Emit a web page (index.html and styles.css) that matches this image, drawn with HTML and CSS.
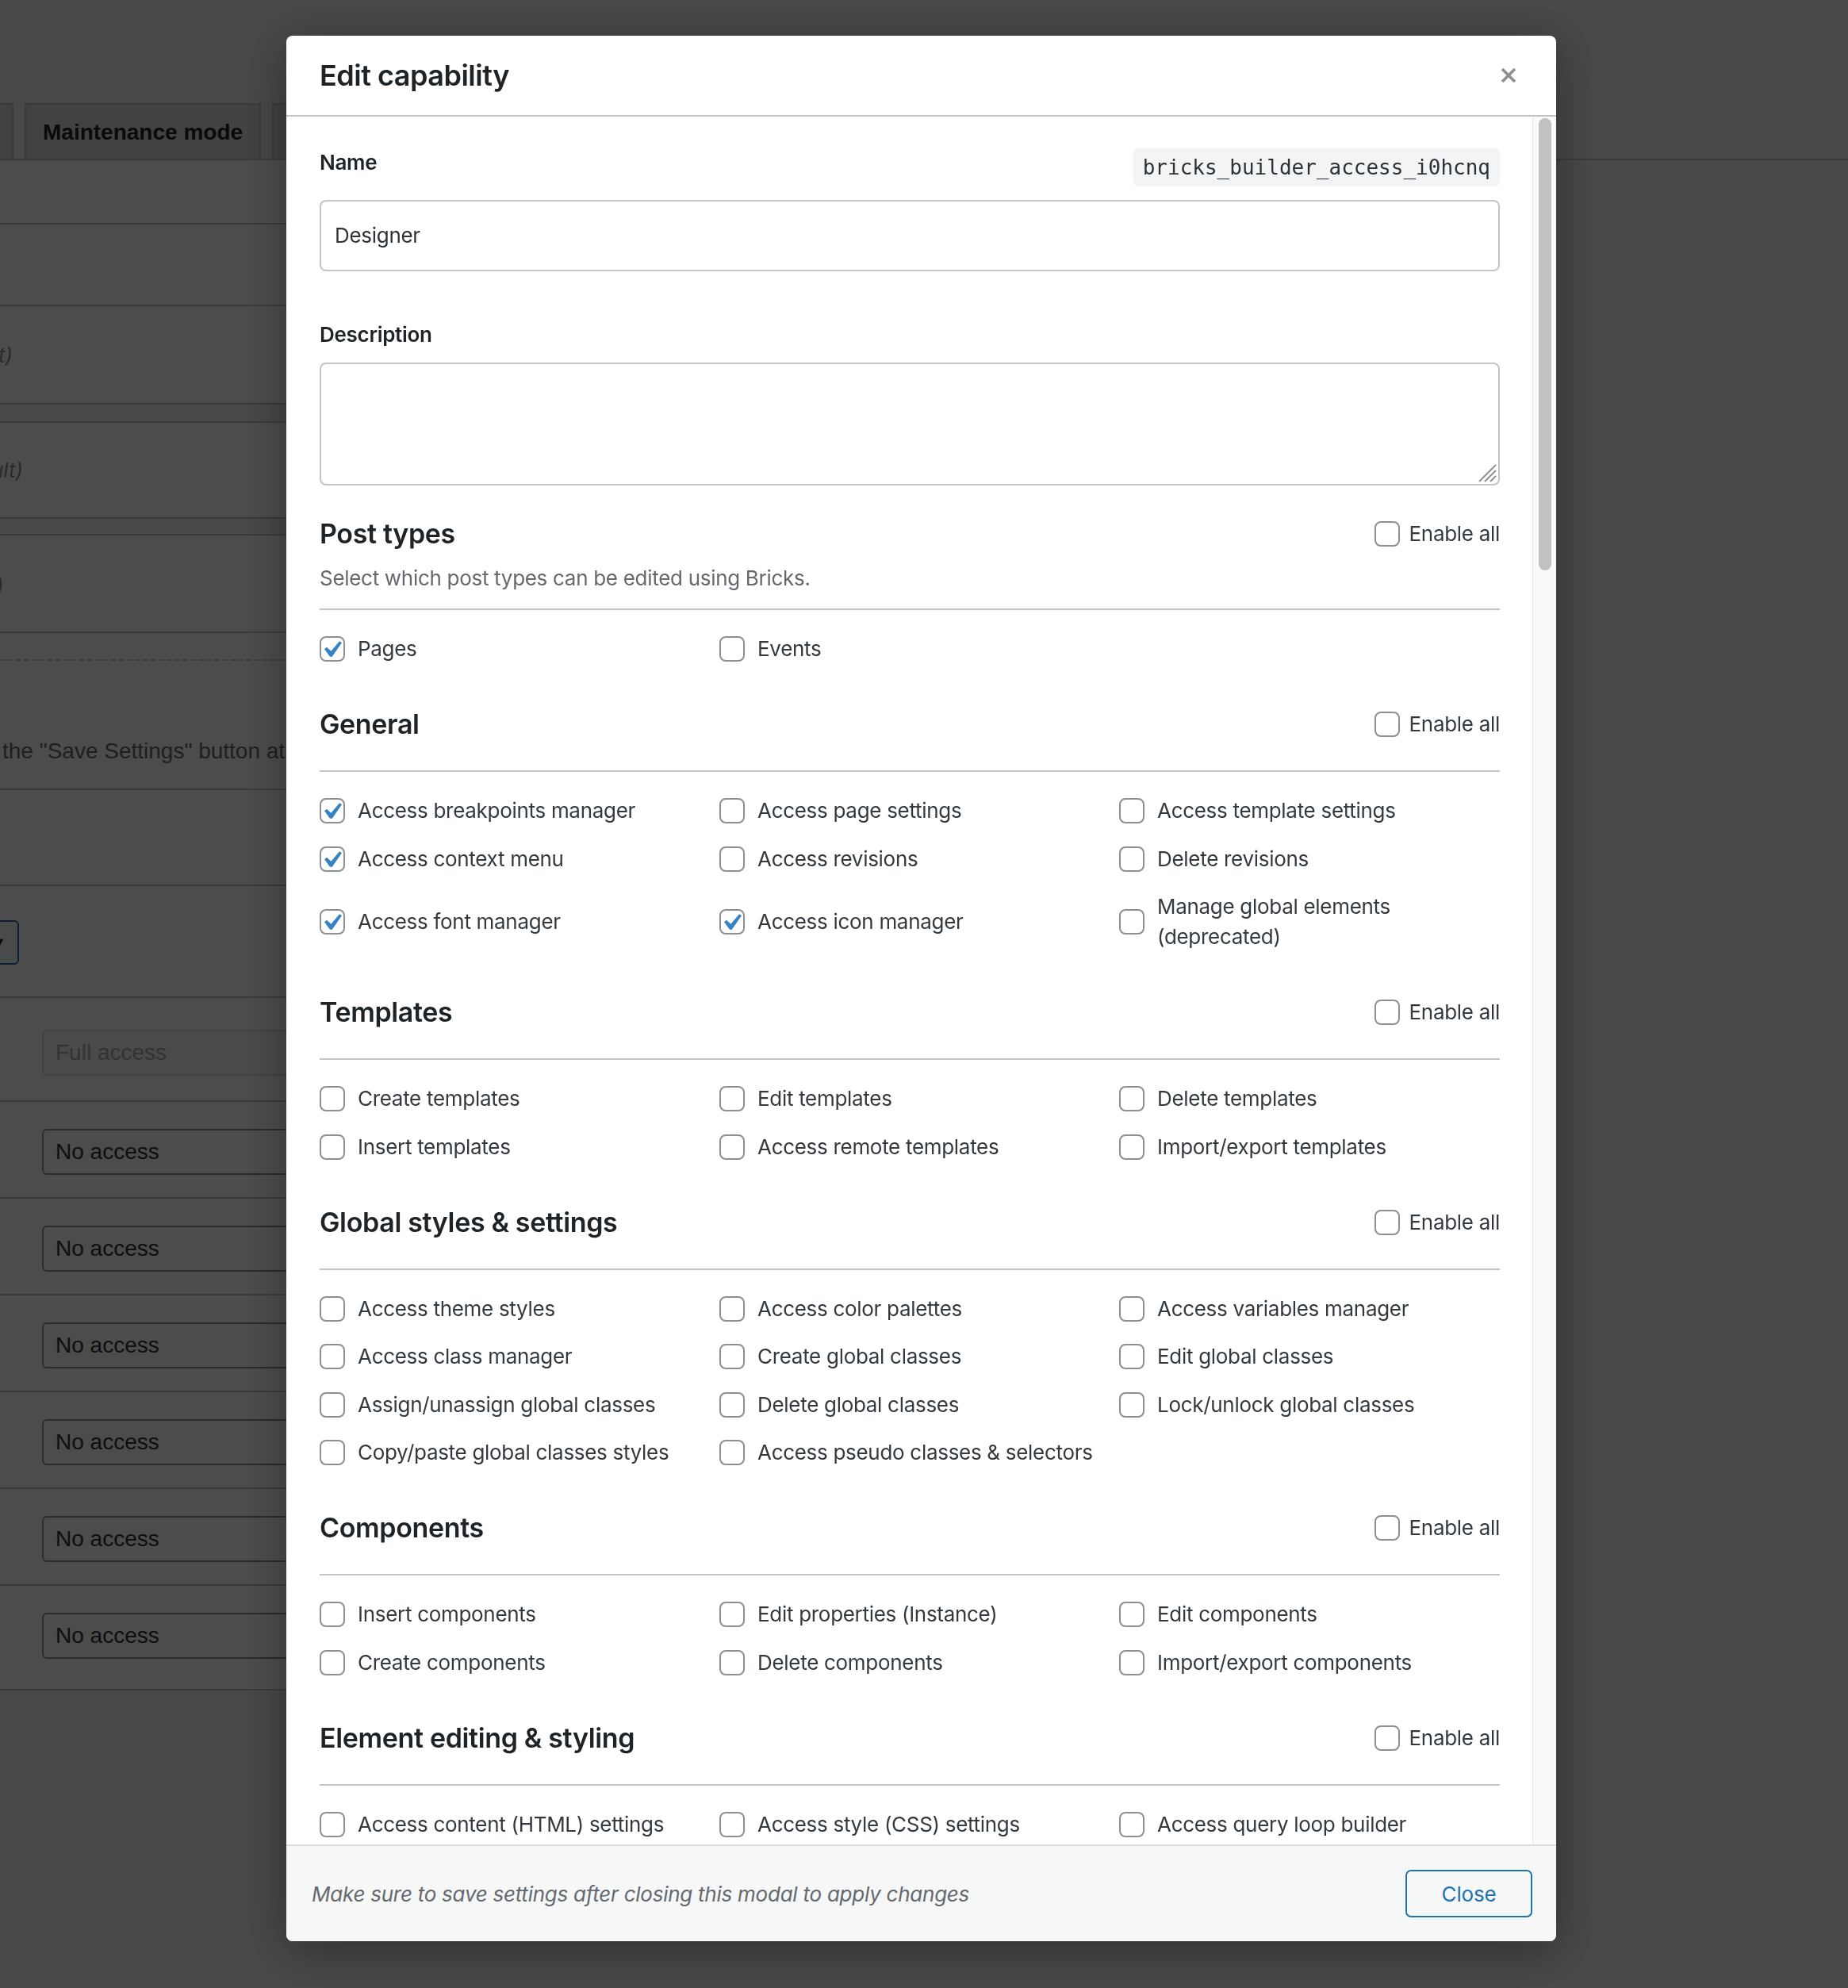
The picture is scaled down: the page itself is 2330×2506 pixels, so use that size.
FILE: index.html
```html
<!DOCTYPE html>
<html lang="en">
<head>
<meta charset="utf-8">
<title>Edit capability</title>
<link rel="stylesheet" href="styles.css">
</head>
<body>
<div class="admin">
  <nav class="tabs">
    <span class="tab tab-prev">Builder access</span>
    <span class="tab">Maintenance mode</span>
    <span class="tab">Custom code</span>
    <span class="tab">Performance</span>
  </nav>
  <div class="bg-table">
    <div class="bg-row h79"></div>
    <div class="bg-row h101"></div>
    <div class="bg-row h122 mid"><span class="bg-th end16">Author (default)</span></div>
    <div class="bg-gap h21"></div>
    <div class="bg-row h119 mid"><span class="bg-th end29">Contributor (default)</span></div>
    <div class="bg-gap h19"></div>
    <div class="bg-row h121 mid"><span class="bg-th end5 plain">Subscriber (no access)</span></div>
    <div class="bg-row h33 dashed"></div>
    <div class="bg-row h161 note-row"><span class="bg-note">the "Save Settings" button at the bottom</span></div>
    <div class="bg-row h119"></div>
    <div class="bg-row h139 btn-row"><span class="bg-btn">▾</span></div>
    <div class="bg-row h129 field-row"><span class="bg-select is-disabled">Full access</span></div>
    <div class="bg-row r122 field-row2"><span class="bg-select">No access</span></div>
    <div class="bg-row r122 field-row2"><span class="bg-select">No access</span></div>
    <div class="bg-row r122 field-row2"><span class="bg-select">No access</span></div>
    <div class="bg-row r122 field-row2"><span class="bg-select">No access</span></div>
    <div class="bg-row r122 field-row2"><span class="bg-select">No access</span></div>
    <div class="bg-row r132 field-row2"><span class="bg-select">No access</span></div>
  </div>
</div>

<div class="backdrop"></div>

<div class="modal" role="dialog" aria-labelledby="modal-title">
  <header class="modal-head">
    <h2 id="modal-title">Edit capability</h2>
    <button class="modal-x" aria-label="Close">
      <svg viewBox="0 0 20 20" width="20" height="20"><path d="M2 2 L18 18 M18 2 L2 18" stroke="#8c8f94" stroke-width="3.6" fill="none"/></svg>
    </button>
  </header>

  <div class="modal-main">
    <div class="modal-body">
      <div class="name-row">
        <label class="field-label">Name</label>
        <code class="cap-id">bricks_builder_access_i0hcnq</code>
      </div>
      <div class="text-input">Designer</div>

      <label class="field-label desc-label">Description</label>
      <div class="textarea"><span class="resize"><svg viewBox="0 0 24 24" width="24" height="24"><path d="M23 2 L2 23 M23 9 L9 23 M23 16 L16 23" stroke="#8c8f94" stroke-width="2" fill="none"/></svg></span></div>

      <section class="section first">
        <div class="section-top has-desc">
          <div class="section-head">
            <h3>Post types</h3>
            <label class="check enable"><span class="box"></span>Enable all</label>
          </div>
          <p class="section-desc">Select which post types can be edited using Bricks.</p>
        </div>
        <div class="grid">
          <label class="check"><span class="box on"><svg viewBox="0 0 20 20"><path d="M14.83 4.89l1.34.94-5.81 8.38H9.02L5.78 9.670l1.34-1.25 2.57 2.4z"/></svg></span>Pages</label>
          <label class="check"><span class="box"></span>Events</label>
        </div>
      </section>

      <section class="section">
        <div class="section-top">
          <div class="section-head">
            <h3>General</h3>
            <label class="check enable"><span class="box"></span>Enable all</label>
          </div>
        </div>
        <div class="grid">
          <label class="check"><span class="box on"><svg viewBox="0 0 20 20"><path d="M14.83 4.89l1.34.94-5.81 8.38H9.02L5.78 9.67l1.34-1.25 2.57 2.4z"/></svg></span>Access breakpoints manager</label>
          <label class="check"><span class="box"></span>Access page settings</label>
          <label class="check"><span class="box"></span>Access template settings</label>
          <label class="check"><span class="box on"><svg viewBox="0 0 20 20"><path d="M14.83 4.89l1.34.94-5.81 8.38H9.02L5.78 9.67l1.34-1.25 2.57 2.4z"/></svg></span>Access context menu</label>
          <label class="check"><span class="box"></span>Access revisions</label>
          <label class="check"><span class="box"></span>Delete revisions</label>
          <label class="check"><span class="box on"><svg viewBox="0 0 20 20"><path d="M14.83 4.89l1.34.94-5.81 8.38H9.02L5.78 9.67l1.34-1.25 2.57 2.4z"/></svg></span>Access font manager</label>
          <label class="check"><span class="box on"><svg viewBox="0 0 20 20"><path d="M14.83 4.89l1.34.94-5.81 8.38H9.02L5.78 9.67l1.34-1.25 2.57 2.4z"/></svg></span>Access icon manager</label>
          <label class="check"><span class="box"></span><span class="wrap">Manage global elements (deprecated)</span></label>
        </div>
      </section>

      <section class="section">
        <div class="section-top">
          <div class="section-head">
            <h3>Templates</h3>
            <label class="check enable"><span class="box"></span>Enable all</label>
          </div>
        </div>
        <div class="grid">
          <label class="check"><span class="box"></span>Create templates</label>
          <label class="check"><span class="box"></span>Edit templates</label>
          <label class="check"><span class="box"></span>Delete templates</label>
          <label class="check"><span class="box"></span>Insert templates</label>
          <label class="check"><span class="box"></span>Access remote templates</label>
          <label class="check"><span class="box"></span>Import/export templates</label>
        </div>
      </section>

      <section class="section">
        <div class="section-top">
          <div class="section-head">
            <h3>Global styles &amp; settings</h3>
            <label class="check enable"><span class="box"></span>Enable all</label>
          </div>
        </div>
        <div class="grid">
          <label class="check"><span class="box"></span>Access theme styles</label>
          <label class="check"><span class="box"></span>Access color palettes</label>
          <label class="check"><span class="box"></span>Access variables manager</label>
          <label class="check"><span class="box"></span>Access class manager</label>
          <label class="check"><span class="box"></span>Create global classes</label>
          <label class="check"><span class="box"></span>Edit global classes</label>
          <label class="check"><span class="box"></span>Assign/unassign global classes</label>
          <label class="check"><span class="box"></span>Delete global classes</label>
          <label class="check"><span class="box"></span>Lock/unlock global classes</label>
          <label class="check"><span class="box"></span>Copy/paste global classes styles</label>
          <label class="check"><span class="box"></span>Access pseudo classes &amp; selectors</label>
        </div>
      </section>

      <section class="section">
        <div class="section-top">
          <div class="section-head">
            <h3>Components</h3>
            <label class="check enable"><span class="box"></span>Enable all</label>
          </div>
        </div>
        <div class="grid">
          <label class="check"><span class="box"></span>Insert components</label>
          <label class="check"><span class="box"></span>Edit properties (Instance)</label>
          <label class="check"><span class="box"></span>Edit components</label>
          <label class="check"><span class="box"></span>Create components</label>
          <label class="check"><span class="box"></span>Delete components</label>
          <label class="check"><span class="box"></span>Import/export components</label>
        </div>
      </section>

      <section class="section">
        <div class="section-top">
          <div class="section-head">
            <h3>Element editing &amp; styling</h3>
            <label class="check enable"><span class="box"></span>Enable all</label>
          </div>
        </div>
        <div class="grid">
          <label class="check"><span class="box"></span>Access content (HTML) settings</label>
          <label class="check"><span class="box"></span>Access style (CSS) settings</label>
          <label class="check"><span class="box"></span>Access query loop builder</label>
        </div>
      </section>
    </div>
    <div class="scrollbar"><div class="thumb"></div></div>
  </div>

  <footer class="modal-foot">
    <p class="foot-note">Make sure to save settings after closing this modal to apply changes</p>
    <button class="btn-close">Close</button>
  </footer>
</div>
</body>
</html>
```

FILE: styles.css
```css
* { box-sizing: border-box; }

html, body { margin: 0; padding: 0; }

body {
  width: 2330px;
  height: 2506px;
  overflow: hidden;
  background: #f0f0f1;
  font-family: Inter, "Noto Sans", sans-serif;
}

/* ---------- dimmed admin page behind the modal ---------- */
.admin {
  font-family: "Liberation Sans", Arial, sans-serif;
  color: #1d2327;
  padding-top: 130px;
}

.tabs {
  display: flex;
  gap: 14px;
  height: 72px;
  padding-left: 31px;
  border-bottom: 2px solid #c3c4c7;
}

.tab {
  flex: none;
  height: 70px;
  padding: 0 21px;
  border: 2px solid #c3c4c7;
  border-bottom: 0;
  background: #dcdcde;
  font-weight: 700;
  font-size: 28px;
  line-height: 70px;
  white-space: nowrap;
}

.tab-prev {
  width: 200px;
  margin-left: -214px;
  overflow: hidden;
  color: transparent;
}

.bg-table {
  width: 1900px;
  background: #fff;
}

.bg-row {
  display: flex;
  border-bottom: 2px solid #c3c4c7;
}

.bg-gap {
  background: #f0f0f1;
  border-bottom: 2px solid #c3c4c7;
}

.dashed { border-bottom: 2px dashed #c3c4c7; }

.h19 { height: 21px; }
.h21 { height: 23px; }
.h33 { height: 35px; }
.h79 { height: 81px; }
.h101 { height: 103px; }
.h119 { height: 121px; }
.h121 { height: 123px; }
.h122 { height: 124px; }
.h129 { height: 131px; }
.h139 { height: 141px; }
.h161 { height: 163px; }
.r122 { height: 122px; }
.r132 { height: 132px; }

.mid { align-items: center; }

.bg-th {
  flex: none;
  width: 400px;
  text-align: right;
  font-family: Inter, sans-serif;
  font-style: italic;
  font-size: 26px;
  color: #8c8f94;
}

.end16 { margin-left: -384px; }
.end29 { margin-left: -371px; }
.end5 { margin-left: -395px; }
.plain { font-style: normal; }

.note-row { align-items: flex-start; padding-top: 98px; }

.bg-note {
  padding-left: 3px;
  font-size: 28px;
  white-space: nowrap;
  color: #646970;
}

.btn-row { padding-top: 43px; }

.bg-btn {
  flex: none;
  width: 130px;
  height: 56px;
  margin-left: -106px;
  border: 2px solid #2271b1;
  border-radius: 6px;
  background: #f6f7f7;
  color: #1d2327;
  font-size: 22px;
  line-height: 52px;
  text-align: right;
  padding-right: 18px;
}

.field-row { padding-top: 40px; }
.field-row2 { padding-top: 34px; }

.bg-select {
  flex: none;
  width: 700px;
  height: 58px;
  margin-left: 53px;
  padding-left: 15px;
  border: 2px solid #8c8f94;
  border-radius: 6px;
  background: #fff;
  font-size: 28px;
  line-height: 54px;
  color: #2c3338;
}

.bg-select.is-disabled {
  border-color: #dcdcde;
  background: #f6f7f7;
  color: #a7aaad;
}

.backdrop {
  position: fixed;
  inset: 0;
  background: rgba(0, 0, 0, 0.7);
}

/* ---------- modal ---------- */
.modal {
  position: fixed;
  left: 361px;
  top: 45px;
  width: 1601px;
  height: 2402px;
  display: flex;
  flex-direction: column;
  background: #fff;
  border-radius: 8px;
  overflow: hidden;
  box-shadow: 0 10px 60px rgba(0, 0, 0, 0.35);
  color: #32393f;
  letter-spacing: -0.3px;
}

.modal-head {
  flex: none;
  height: 102px;
  display: flex;
  align-items: center;
  justify-content: space-between;
  padding: 0 50px 0 42px;
  border-bottom: 2px solid #c3c4c7;
}

.modal-head h2 {
  margin: 0;
  font-size: 36px;
  font-weight: 600;
  letter-spacing: -0.5px;
  color: #1d2327;
}

.modal-x {
  display: flex;
  padding: 0;
  border: 0;
  background: none;
}

.modal-main {
  flex: 1;
  min-height: 0;
  display: flex;
}

.modal-body {
  flex: 1;
  min-width: 0;
  overflow: hidden;
  padding: 39px 41px 0 42px;
  font-size: 26px;
  line-height: 38px;
}

.scrollbar {
  flex: none;
  width: 30px;
  padding: 2px 6px 0 7px;
  border-left: 1px solid #e8e8e8;
  background: #fafafa;
}

.thumb {
  height: 570px;
  border-radius: 8px;
  background: #c1c1c1;
}

.name-row {
  display: flex;
  align-items: flex-start;
  justify-content: space-between;
  height: 48px;
}

.field-label {
  display: block;
  font-weight: 600;
  color: #1d2327;
}

.cap-id {
  height: 48px;
  margin-top: 1px;
  padding: 0 12px;
  border-radius: 6px;
  background: #f3f4f5;
  font-family: "DejaVu Sans Mono", "Liberation Mono", monospace;
  font-size: 26px;
  line-height: 48px;
  letter-spacing: 0;
  color: #2c3338;
}

.text-input {
  margin-top: 18px;
  height: 90px;
  padding-left: 17px;
  border: 2px solid #c3c4c7;
  border-radius: 8px;
  line-height: 86px;
  color: #2c3338;
}

.desc-label { margin-top: 61px; }

.textarea {
  margin-top: 16px;
  height: 155px;
  border: 2px solid #c3c4c7;
  border-radius: 8px;
  display: flex;
  align-items: flex-end;
  justify-content: flex-end;
  padding: 0 2px 2px 0;
}

.resize { display: flex; }

.section { margin-top: 54px; }
.section.first { margin-top: 39px; }

.section-top {
  padding-bottom: 36px;
  border-bottom: 2px solid #c3c4c7;
}

.section-top.has-desc { padding-bottom: 19px; }

.section-head {
  display: flex;
  align-items: center;
  justify-content: space-between;
  height: 44px;
}

.section-head h3 {
  margin: 0;
  font-size: 34px;
  font-weight: 600;
  letter-spacing: -0.35px;
  color: #1d2327;
}

.section-desc {
  margin: 15px 0 0;
  color: #646970;
}

.grid {
  display: grid;
  grid-template-columns: repeat(3, 1fr);
  column-gap: 24px;
  row-gap: 22.5px;
  padding-top: 30px;
}

.check {
  display: flex;
  align-items: center;
  gap: 16px;
  white-space: nowrap;
}

.check .wrap { white-space: normal; }

.check.enable { gap: 12px; }

.box {
  flex: none;
  position: relative;
  width: 32px;
  height: 32px;
  border: 2px solid #8c8f94;
  border-radius: 8px;
  background: #fff;
}

.box svg {
  position: absolute;
  left: -8px;
  top: -6px;
  width: 42px;
  height: 42px;
  fill: #3582c4;
}

.modal-foot {
  flex: none;
  height: 122px;
  display: flex;
  align-items: center;
  justify-content: space-between;
  padding: 0 30px 0 32px;
  border-top: 2px solid #dcdcde;
  background: #f6f7f7;
}

.foot-note {
  margin: 0;
  font-size: 26px;
  font-style: italic;
  letter-spacing: -0.25px;
  color: #646970;
}

.btn-close {
  width: 160px;
  height: 60px;
  border: 2px solid #2271b1;
  border-radius: 7px;
  background: #f6f7f7;
  color: #2271b1;
  font-family: Inter, "Noto Sans", sans-serif;
  font-size: 26px;
  letter-spacing: -0.2px;
}
```
